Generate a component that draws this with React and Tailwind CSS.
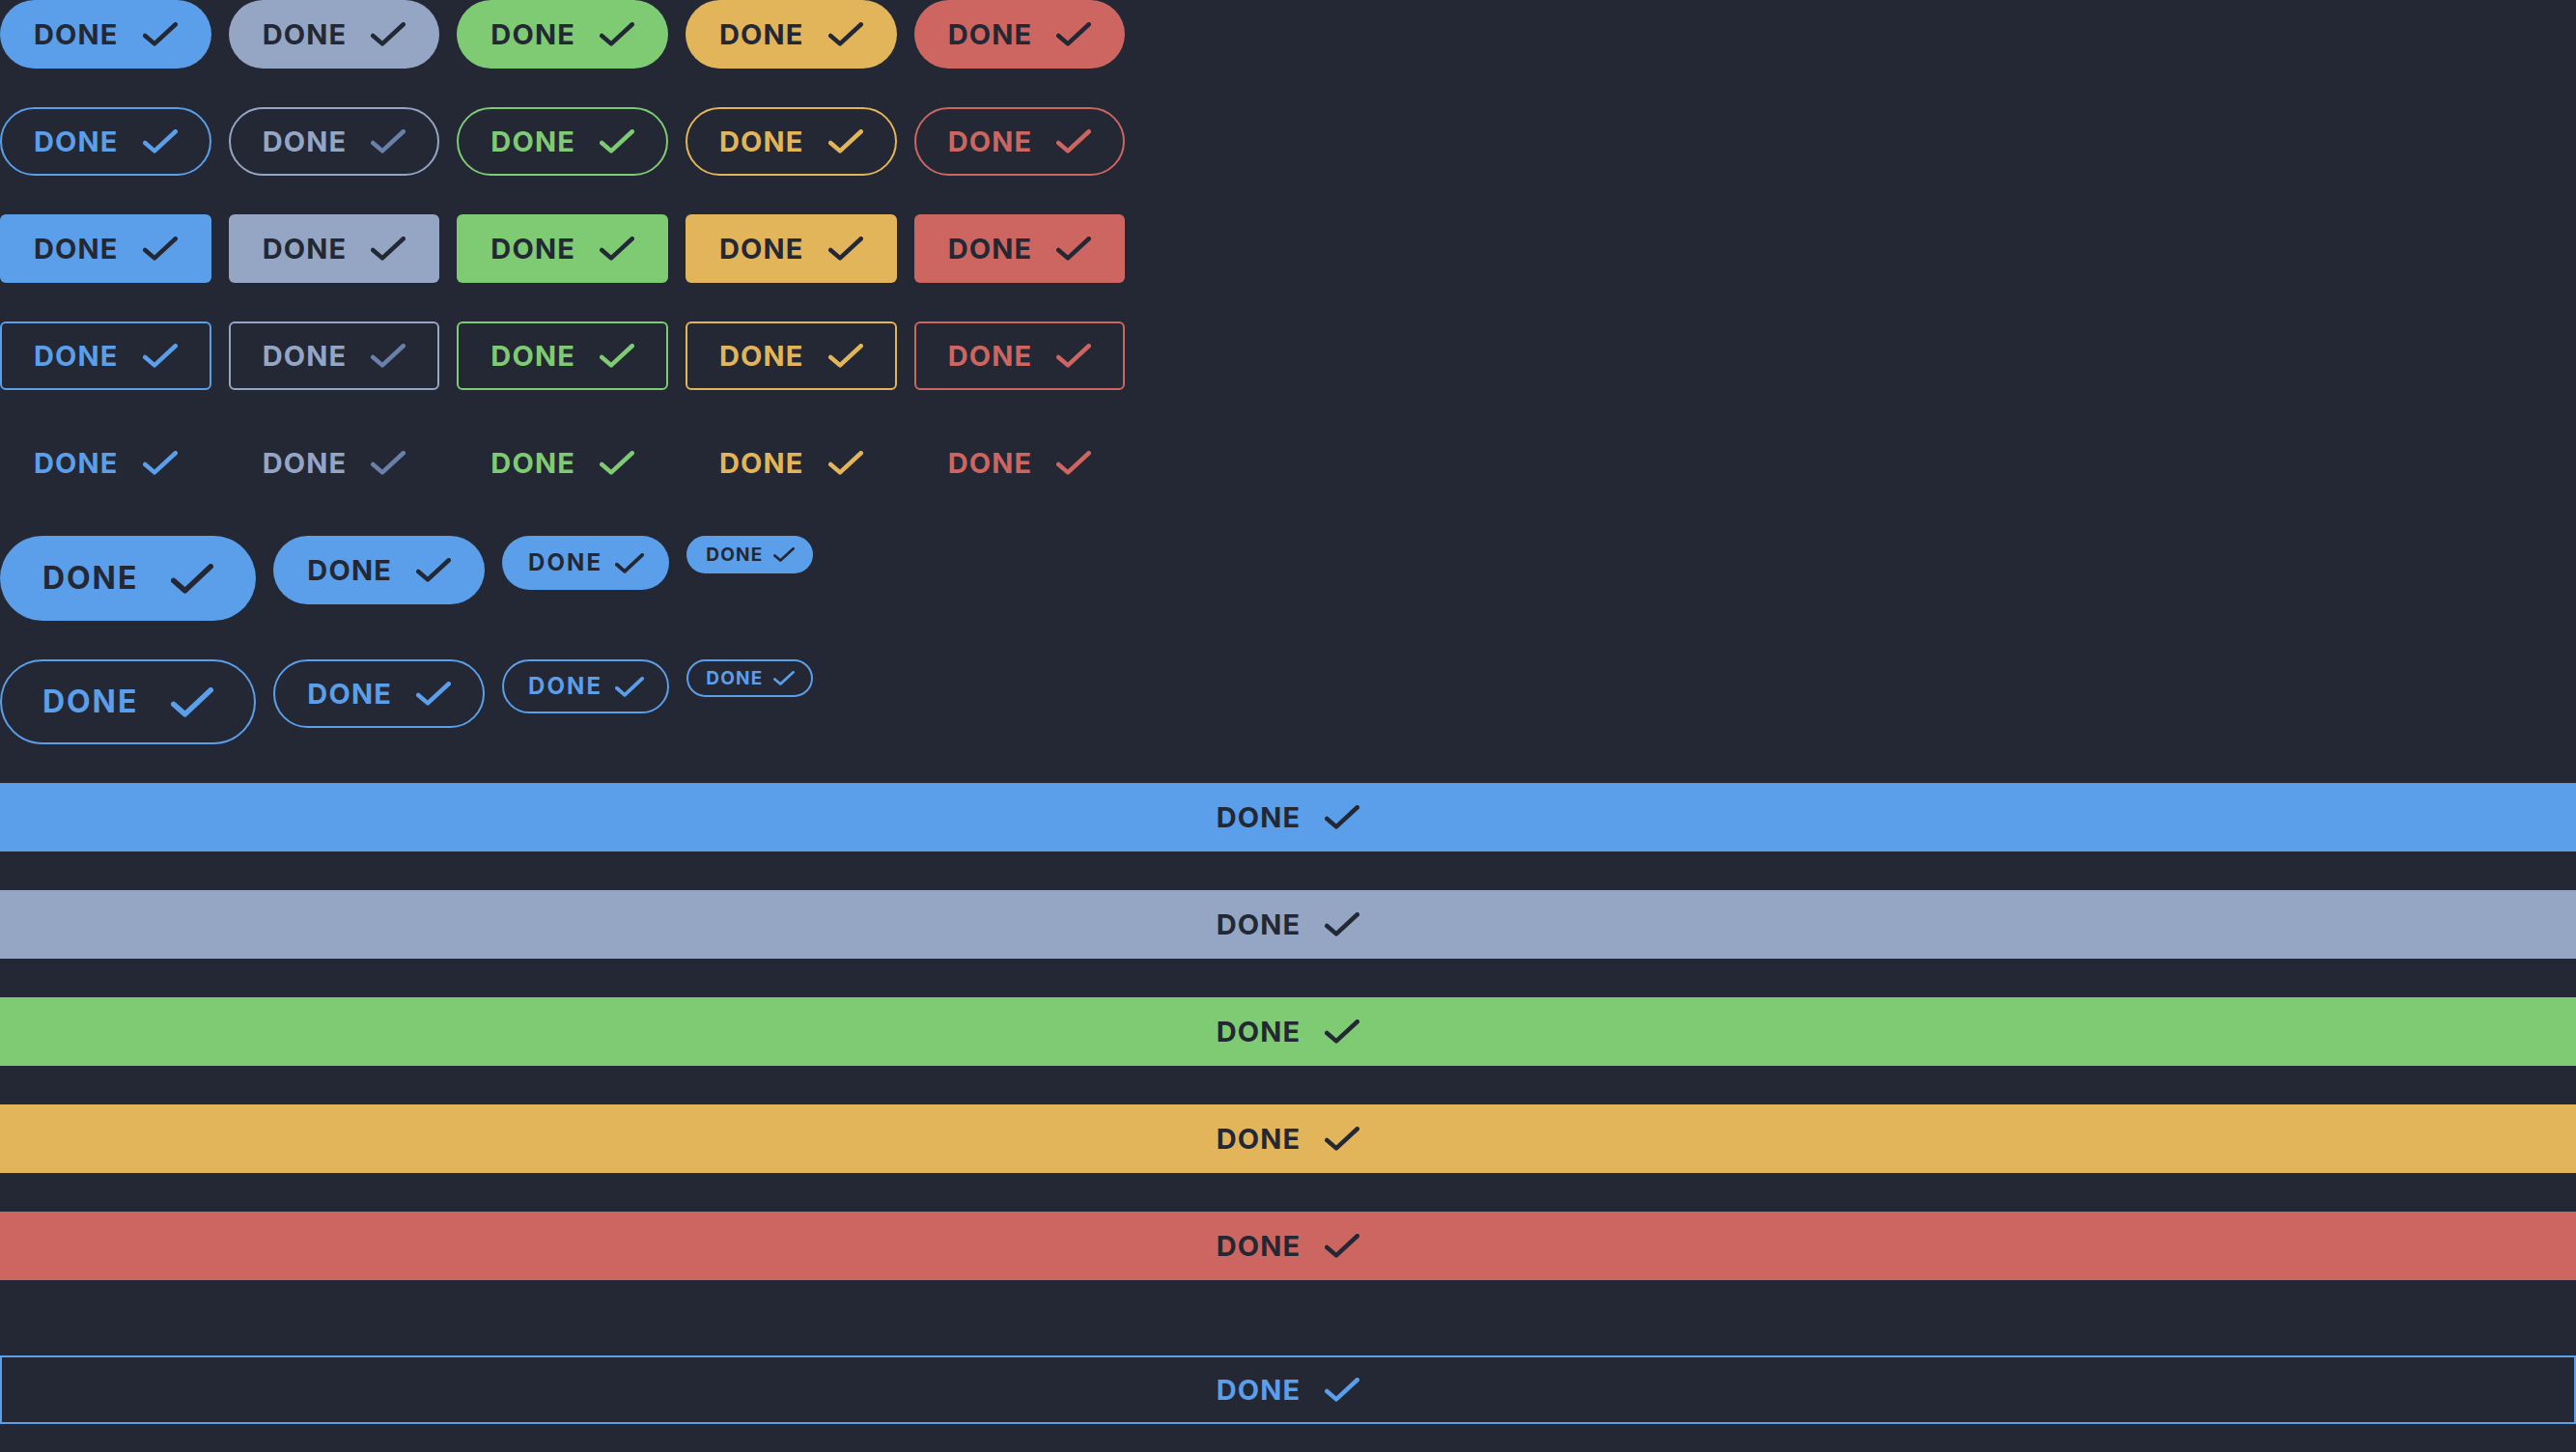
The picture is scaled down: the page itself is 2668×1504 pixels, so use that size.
import React from "react";

const COLORS = {
  blue: { fill: "bg-[#5b9ee9]", text: "text-[#5b9ee9]", border: "border-[#5b9ee9]", check: "text-[#5b9ee9]" },
  gray: { fill: "bg-[#94a6c4]", text: "text-[#94a6c4]", border: "border-[#94a6c4]", check: "text-[#6980a8]" },
  green: { fill: "bg-[#7fcb73]", text: "text-[#7fcb73]", border: "border-[#7fcb73]", check: "text-[#7fcb73]" },
  yellow: { fill: "bg-[#e3b55b]", text: "text-[#e3b55b]", border: "border-[#e3b55b]", check: "text-[#e3b55b]" },
  red: { fill: "bg-[#cd6661]", text: "text-[#cd6661]", border: "border-[#cd6661]", check: "text-[#cd6661]" },
};

const SIZES = {
  lg: { box: "h-[88px] pl-[42px] pr-[42px]", text: "text-[32px] tracking-[0.06em]", gap: "ml-[34px]", svg: "w-[44px] h-[31px]" },
  md: { box: "h-[71px] pl-[33px] pr-[33px]", text: "text-[29px] tracking-[0.04em]", gap: "ml-[25px]", svg: "w-[36px] h-[25px]" },
  sm: { box: "h-[56px] pl-[25px] pr-[24px]", text: "text-[24px] tracking-[0.09em]", gap: "ml-[13px]", svg: "w-[30px] h-[21px]" },
  xs: { box: "h-[39px] pl-[18px] pr-[17px]", text: "text-[19px] tracking-[0.065em]", gap: "ml-[10px]", svg: "w-[22px] h-[15px]" },
};

function Check({ className }) {
  return (
    <svg viewBox="0 0 36 25" className={className} fill="none" preserveAspectRatio="none">
      <path
        d="M2.25 14 L12 22.4 L33.75 2.25"
        stroke="currentColor"
        strokeWidth="4.5"
        strokeLinecap="round"
        strokeLinejoin="round"
      />
    </svg>
  );
}

function Btn({ color = "blue", variant = "fill", shape = "pill", size = "md", full = false }) {
  const c = COLORS[color];
  const s = SIZES[size];
  const shapeCls = shape === "pill" ? "rounded-full" : shape === "rect" ? "rounded-[6px]" : "rounded-none";
  let variantCls = "";
  let textCls = "";
  let checkCls = "";
  if (variant === "fill") {
    variantCls = `${c.fill} border-transparent`;
    textCls = "text-[#232834]";
    checkCls = "text-[#232834]";
  } else if (variant === "outline") {
    variantCls = `${c.border} bg-transparent`;
    textCls = c.text;
    checkCls = c.check;
  } else {
    variantCls = "border-transparent bg-transparent";
    textCls = c.text;
    checkCls = c.check;
  }
  return (
    <div
      className={`flex items-center border-2 shrink-0 ${full ? "w-full justify-center" : ""} ${shapeCls} ${s.box} ${variantCls}`}
    >
      <span className={`font-bold leading-none ${s.text} ${textCls}`}>DONE</span>
      <Check className={`${s.gap} ${s.svg} ${checkCls} shrink-0`} />
    </div>
  );
}

const ORDER = ["blue", "gray", "green", "yellow", "red"];

export default function App() {
  return (
    <div className="min-h-screen w-full bg-[#232834] font-['Inter','Liberation_Sans',sans-serif]">
      <div className="flex flex-col gap-[40px]">
        <div className="flex items-start gap-[18px]">
          {ORDER.map((c) => (
            <Btn key={c} color={c} variant="fill" shape="pill" />
          ))}
        </div>
        <div className="flex items-start gap-[18px]">
          {ORDER.map((c) => (
            <Btn key={c} color={c} variant="outline" shape="pill" />
          ))}
        </div>
        <div className="flex items-start gap-[18px]">
          {ORDER.map((c) => (
            <Btn key={c} color={c} variant="fill" shape="rect" />
          ))}
        </div>
        <div className="flex items-start gap-[18px]">
          {ORDER.map((c) => (
            <Btn key={c} color={c} variant="outline" shape="rect" />
          ))}
        </div>
        <div className="flex items-start gap-[18px]">
          {ORDER.map((c) => (
            <Btn key={c} color={c} variant="clear" shape="rect" />
          ))}
        </div>
        <div className="flex items-start gap-[18px]">
          <Btn size="lg" />
          <Btn size="md" />
          <Btn size="sm" />
          <Btn size="xs" />
        </div>
        <div className="flex items-start gap-[18px]">
          <Btn size="lg" variant="outline" />
          <Btn size="md" variant="outline" />
          <Btn size="sm" variant="outline" />
          <Btn size="xs" variant="outline" />
        </div>
        {ORDER.map((c) => (
          <Btn key={c} color={c} variant="fill" shape="none" full />
        ))}
        <div className="mt-[38px]">
          <Btn color="blue" variant="outline" shape="none" full />
        </div>
      </div>
    </div>
  );
}
